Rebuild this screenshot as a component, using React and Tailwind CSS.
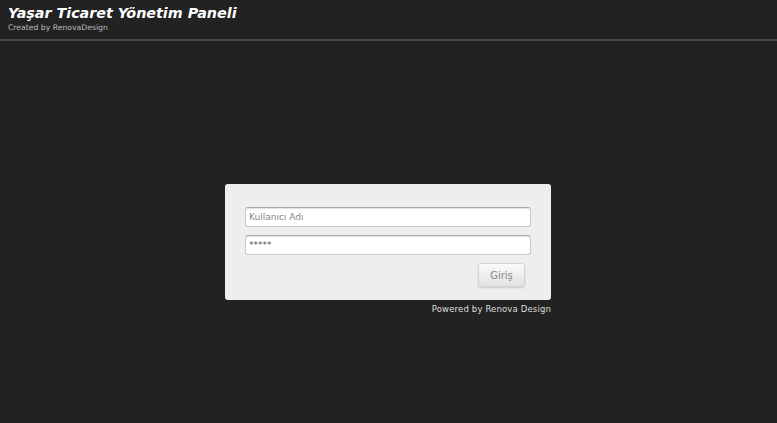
import { useState } from "react";

const App = () => {
  const [user, setUser] = useState("");
  const [pass, setPass] = useState("*****");

  return (
    <div
      className="min-h-screen w-full bg-[#222222] text-white"
      style={{ fontFamily: '"DejaVu Sans", Verdana, sans-serif' }}
    >
      {/* header */}
      <div className="h-[39px] px-2 pt-[4px]">
        <h1 className="text-[14.3px] leading-[18px] font-bold italic text-white">
          Yaşar Ticaret Yönetim Paneli
        </h1>
        <p className="mt-[1px] text-[7.7px] leading-[10px] text-[#bbbbbb]">
          Created by RenovaDesign
        </p>
      </div>
      <div className="h-[2px] w-full bg-[#4a4a4a]" />

      {/* login box */}
      <div className="flex flex-col items-center pt-[143px] pr-[1px]">
        <div className="w-[326px]">
          <div className="rounded-[3px] bg-[#eeeeee] px-5 pt-[23px] pb-[13px]">
            <input
              type="text"
              value={user}
              onChange={(e) => setUser(e.target.value)}
              placeholder="Kullanıcı Adı"
              className="block h-[20px] w-full rounded-[3px] border border-[#c8c8c8] border-t-[#aaaaaa] bg-white px-[3px] text-[9px] text-[#555] shadow-[inset_0_1px_1px_rgba(0,0,0,0.12)] outline-none placeholder:text-[#888]"
            />
            <input
              type="text"
              value={pass}
              onChange={(e) => setPass(e.target.value)}
              className="mt-2 block h-[20px] w-full rounded-[3px] border border-[#c8c8c8] border-t-[#aaaaaa] bg-white px-[3px] text-[9px] text-[#555] shadow-[inset_0_1px_1px_rgba(0,0,0,0.12)] outline-none"
            />
            <div className="mt-2 flex justify-end pr-[6px]">
              <button className="h-[24px] w-[47px] rounded-[3px] border border-[#d4d4d4] bg-gradient-to-b from-[#fafafa] to-[#e2e2e2] text-[10px] text-[#888] shadow-[0_1px_2px_rgba(0,0,0,0.15)]">
                Giriş
              </button>
            </div>
          </div>
          <p className="mt-[2px] text-right text-[8.5px] leading-[14px] tracking-[0.15px] text-[#dddddd]">
            Powered by Renova Design
          </p>
        </div>
      </div>
    </div>
  );
};

export default App;
